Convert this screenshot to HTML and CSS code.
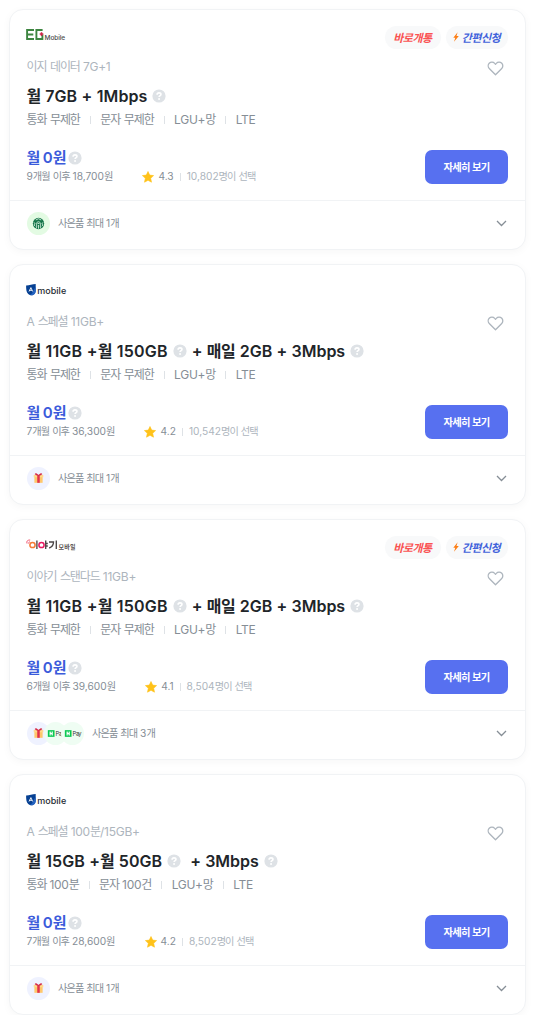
FILE: index.html
```html
<!DOCTYPE html>
<html lang="ko">
<head>
<meta charset="utf-8">
<title>요금제</title>
<link rel="stylesheet" href="styles.css">
</head>
<body>
<svg class="defs" aria-hidden="true">
  <symbol id="heart" viewBox="0 0 18 16"><path d="M9 14.6 2.6 8.3C.8 6.500.8 3.900 2.300 2.400 4 .8 6.600.9 8.100 2.500L9 3.400l.9-.9C11.400.9 14 .8 15.700 2.400c1.500 1.500 1.500 4.100-.3 5.900z" fill="none" stroke="#adb5bd" stroke-width="1.400" stroke-linejoin="round"/></symbol>
  <symbol id="help" viewBox="0 0 14 14"><circle cx="7" cy="7" r="6.600" fill="#dee2e6"/><path d="M5.100 5.700C5.100 4.500 6 3.900 7 3.900s1.950.6 1.950 1.600c0 1.200-1.850 1.250-1.850 2.600" fill="none" stroke="#fff" stroke-width="1.600"/><circle cx="7.050" cy="10" r="1" fill="#fff"/></symbol>
  <symbol id="star" viewBox="0 0 12 12"><path d="m6 .5 1.700 3.600 3.900.5-2.900 2.700.8 3.900L6 9.300l-3.500 1.900.8-3.900L.4 4.600l3.900-.5z" fill="#ffc21a" stroke="#ffc21a" stroke-width=".6" stroke-linejoin="round"/></symbol>
  <symbol id="chev" viewBox="0 0 11 7"><path d="m1 1 4.500 4.500L10 1" fill="none" stroke="#868e96" stroke-width="1.300"/></symbol>
  <symbol id="gift" viewBox="0 0 24 24"><circle cx="12" cy="12" r="12" fill="#eff2ff"/><path d="M7.700 9.800h8.600v6.700H7.700z" fill="#ffc76b"/><path d="M7 8.300h10v2.400H7z" fill="#ffd98c"/><path d="M10.700 8.300h2.600v8.200h-2.600z" fill="#e0314c"/><path d="M12 8.700C10.500 6.700 8.300 6.500 8.400 7.400c.1.900 1.800 1.300 3.600 1.300 1.800 0 3.500-.4 3.600-1.300.1-.9-2.100-.7-3.600 1.300z" fill="#d52b45" stroke="#d52b45" stroke-width=".5"/></symbol>
  <symbol id="coffee" viewBox="0 0 24 24"><circle cx="12" cy="12" r="12" fill="#e3fbe3"/><circle cx="12" cy="12" r="5.900" fill="#16764a"/><path d="M9.200 8.300 12 7l2.800 1.300M9.700 17.200c.8-2 .2-3.300.3-5 .1-2.700 3.900-2.700 4 0 .1 1.700-.5 3 .3 5M7 11l1.500 1-1.200 1.500 1.300 1.300M17 11l-1.500 1 1.200 1.500-1.300 1.300M12 13.500v4M11 12h2" fill="none" stroke="#d8f1df" stroke-width=".9"/></symbol>
  <symbol id="npay" viewBox="0 0 24 24"><circle cx="12" cy="12" r="12" fill="#effdf3"/><path d="M4 8.500h7v7H4z" fill="#09c850"/><path d="M6.400 10v4M8.600 10v4M6.400 11.300l2.200 1.400" stroke="#fff" stroke-width="1.200"/><text x="12" y="14.300" font-family="Inter, sans-serif" font-size="6" fill="#333" textLength="9.500">Pay</text></symbol>
  <symbol id="bolt" viewBox="0 0 6 10"><path d="M4.600.3.300 5.800h2L1 9.700l4.800-5.700H3.500z" fill="#fd7e14"/></symbol>
  <symbol id="amobile" viewBox="0 0 42 12"><path d="M.1 1.500C3 1.600 6.500.3 9.700 0v6.500c0 2-.8 3.800-2.700 4.600-1.200.5-3.500.1-4.800-1.100C.4 8.400.1 5.500.1 1.500z" fill="#064092"/><path d="M9.700 2.500v4c0 2-.8 3.800-2.700 4.600-.8.300-1.800.3-2.800-.1C6.800 9.200 7.500 6 9.700 2.500z" fill="#2563c0"/><path d="M3 7.500 4.900 3.600 6.700 7.500M3.900 6.300h2.100" fill="none" stroke="#fff" stroke-width=".9"/><text x="11.200" y="9.700" font-family="Inter, sans-serif" font-size="9" font-weight="500" fill="#252a31" textLength="29">mobile</text></symbol>
  <symbol id="egmobile" viewBox="0 0 42 13"><path d="M8 2H1.100v9H8M1 6.500h6.300M16.600 2h-6.200v9h6V6.500" fill="none" stroke="#3d8540" stroke-width="1.900"/><path d="M15.500 4.300v3.600M13.700 6.100h3.600" stroke="#cf2448" stroke-width="1.500"/><text x="18.600" y="11.700" font-family="Inter, sans-serif" font-size="6.500" font-weight="500" fill="#4b4b4b" textLength="20.500">Mobile</text></symbol>
  <symbol id="story" viewBox="0 0 52 12"><path d="M1 4.500C.1 2 2 .8 4.200 1M2.500 4.500c0-1 .5-1.500 1.500-1.700" fill="none" stroke="#ef4864" stroke-width=".9"/><circle cx="6.500" cy="6" r="2.600" fill="none" stroke="#f57b36" stroke-width="1.500"/><circle cx="15.500" cy="6" r="2.600" fill="none" stroke="#e71b62" stroke-width="1.500"/><path d="M10.900 1.500V10M19.700 1.500V10M20 4.500h1.800M20 7h1.800M23 3h4.500c0 3-1.500 5-4.300 6M30.300 1.500V10" fill="none" stroke="#4b4545" stroke-width="1.350"/><text x="32.500" y="9.800" font-family="Noto Sans CJK KR, sans-serif" font-size="6" font-weight="700" fill="#564f4f" textLength="17">모바일</text></symbol>
</svg>
<main class="list">
  <article class="card">
    <div class="body">
      <div class="top"><svg class="logo eg"><use href="#egmobile"/></svg><div class="badges"><span class="badge red">바로개통</span><span class="badge blue"><svg class="bolt"><use href="#bolt"/></svg>간편신청</span></div></div>
      <div class="name"><span><i>이지 데이터</i> 7G+1</span><svg class="heart"><use href="#heart"/></svg></div>
      <h2 class="data"><i>월</i> 7GB + 1Mbps<svg class="help"><use href="#help"/></svg></h2>
      <div class="specs"><span><i>통화 무제한</i></span><span><i>문자 무제한</i></span><span>LGU+<i>망</i></span><span>LTE</span></div>
      <div class="buy"><div><div class="price"><i>월</i> 0<i>원</i><svg class="help"><use href="#help"/></svg></div>
        <div class="meta"><span class="after">9<i>개월 이후</i> 18,700<i>원</i></span><svg class="star"><use href="#star"/></svg><span class="rate">4.3</span><span class="picks">10,802<i>명이 선택</i></span></div></div>
        <button class="more">자세히 보기</button></div>
    </div>
    <div class="foot"><svg class="gift"><use href="#coffee"/></svg><span class="gifts"><i>사은품 최대</i> 1<i>개</i></span><svg class="chev"><use href="#chev"/></svg></div>
  </article>
  <article class="card">
    <div class="body">
      <div class="top"><svg class="logo"><use href="#amobile"/></svg></div>
      <div class="name"><span>A <i>스페셜</i> 11GB+</span><svg class="heart"><use href="#heart"/></svg></div>
      <h2 class="data"><span class="main"><i>월</i> 11GB +<i>월</i> 150GB</span><svg class="help"><use href="#help"/></svg><span class="plus">+ <i>매일</i> 2GB + 3Mbps</span><svg class="help"><use href="#help"/></svg></h2>
      <div class="specs"><span><i>통화 무제한</i></span><span><i>문자 무제한</i></span><span>LGU+<i>망</i></span><span>LTE</span></div>
      <div class="buy"><div><div class="price"><i>월</i> 0<i>원</i><svg class="help"><use href="#help"/></svg></div>
        <div class="meta"><span class="after">7<i>개월 이후</i> 36,300<i>원</i></span><svg class="star"><use href="#star"/></svg><span class="rate">4.2</span><span class="picks">10,542<i>명이 선택</i></span></div></div>
        <button class="more">자세히 보기</button></div>
    </div>
    <div class="foot"><svg class="gift"><use href="#gift"/></svg><span class="gifts"><i>사은품 최대</i> 1<i>개</i></span><svg class="chev"><use href="#chev"/></svg></div>
  </article>
  <article class="card">
    <div class="body">
      <div class="top"><svg class="logo story"><use href="#story"/></svg><div class="badges"><span class="badge red">바로개통</span><span class="badge blue"><svg class="bolt"><use href="#bolt"/></svg>간편신청</span></div></div>
      <div class="name"><span><i>이야기 스탠다드</i> 11GB+</span><svg class="heart"><use href="#heart"/></svg></div>
      <h2 class="data"><span class="main"><i>월</i> 11GB +<i>월</i> 150GB</span><svg class="help"><use href="#help"/></svg><span class="plus">+ <i>매일</i> 2GB + 3Mbps</span><svg class="help"><use href="#help"/></svg></h2>
      <div class="specs"><span><i>통화 무제한</i></span><span><i>문자 무제한</i></span><span>LGU+<i>망</i></span><span>LTE</span></div>
      <div class="buy"><div><div class="price"><i>월</i> 0<i>원</i><svg class="help"><use href="#help"/></svg></div>
        <div class="meta"><span class="after">6<i>개월 이후</i> 39,600<i>원</i></span><svg class="star"><use href="#star"/></svg><span class="rate">4.1</span><span class="picks">8,504<i>명이 선택</i></span></div></div>
        <button class="more">자세히 보기</button></div>
    </div>
    <div class="foot"><svg class="gift"><use href="#gift"/></svg><svg class="gift over"><use href="#npay"/></svg><svg class="gift over"><use href="#npay"/></svg><span class="gifts"><i>사은품 최대</i> 3<i>개</i></span><svg class="chev"><use href="#chev"/></svg></div>
  </article>
  <article class="card">
    <div class="body">
      <div class="top"><svg class="logo"><use href="#amobile"/></svg></div>
      <div class="name"><span>A <i>스페셜</i> 100<i>분</i>/15GB+</span><svg class="heart"><use href="#heart"/></svg></div>
      <h2 class="data"><span><i>월</i> 15GB +<i>월</i> 50GB</span><svg class="help"><use href="#help"/></svg><span class="plus wide">+ 3Mbps</span><svg class="help"><use href="#help"/></svg></h2>
      <div class="specs"><span><i>통화</i> 100<i>분</i></span><span><i>문자</i> 100<i>건</i></span><span>LGU+<i>망</i></span><span>LTE</span></div>
      <div class="buy"><div><div class="price"><i>월</i> 0<i>원</i><svg class="help"><use href="#help"/></svg></div>
        <div class="meta"><span class="after">7<i>개월 이후</i> 28,600<i>원</i></span><svg class="star"><use href="#star"/></svg><span class="rate">4.2</span><span class="picks">8,502<i>명이 선택</i></span></div></div>
        <button class="more">자세히 보기</button></div>
    </div>
    <div class="foot"><svg class="gift"><use href="#gift"/></svg><span class="gifts"><i>사은품 최대</i> 1<i>개</i></span><svg class="chev"><use href="#chev"/></svg></div>
  </article>
</main>
</body>
</html>
```
FILE: styles.css
```css
* { box-sizing: border-box; }
body { margin: 0; background: #fff; font-family: Inter, "Noto Sans CJK KR", sans-serif; }
svg { display: block; flex: none; }
i { font-style: normal; letter-spacing: -0.09em; word-spacing: .1em; }
.defs { display: none; }
.list { display: flex; flex-direction: column; gap: 14px; padding: 9px 8px 0 9px; }
.card { height: 241px; border: 1px solid #f1f3f5; border-radius: 14px; background: #fff; box-shadow: 0 2px 8px rgba(0, 0, 0, .035); }
.body { height: 190px; padding: 16px 17px 0 16px; }
.top { display: flex; height: 23px; justify-content: space-between; align-items: center; }
.logo { width: 42px; height: 12px; margin-top: -5px; }
.logo.eg { height: 13px; margin-top: -6px; }
.logo.story { width: 52px; margin-top: -5px; }
.badges { display: flex; gap: 5px; }
.badge { display: flex; align-items: center; justify-content: center; height: 23px; border-radius: 12px; background: #f8f9fa; font: italic 700 11px/21px "Noto Sans CJK KR", sans-serif; letter-spacing: -.5px; padding: 0 1px 1px 0; }
.badge.red { width: 56px; color: #fa5252; }
.badge.blue { width: 62px; color: #4263db; }
.bolt { width: 6px; height: 10px; margin-right: 3px; }
.name { display: flex; justify-content: space-between; height: 20px; margin-top: 8px; font-size: 12px; line-height: 20px; letter-spacing: -.25px; color: #adb5bd; padding-left: .5px; white-space: pre; }
.heart { width: 17px; height: 15px; margin: 4px 4px 0 0; }
.data { display: flex; align-items: center; height: 24px; margin: 7px 0 0; padding-left: .5px; font-size: 16px; line-height: 24px; font-weight: 600; letter-spacing: .05px; word-spacing: .3px; color: #212529; white-space: pre; }
.data i { letter-spacing: -.02em; }
.main { letter-spacing: .2px; }
.help { width: 14px; height: 14px; }
.data .help { margin-left: 5px; }
.plus { margin-left: 5px; letter-spacing: -.03px; }
.plus.wide { margin-left: 9px; }
.specs { display: flex; height: 18px; margin-top: 3px; padding-left: .5px; font-size: 12px; line-height: 18px; letter-spacing: -.3px; color: #868e96; white-space: pre; }
.specs span { display: flex; align-items: center; }
.specs span i { white-space: pre; }
.specs span + span::before { content: ""; width: 1px; height: 8px; background: #dee2e6; margin: 0 9.500px 0 10px; }
.buy { display: flex; justify-content: space-between; margin-top: 19px; padding-left: .5px; }
.price { display: flex; align-items: center; height: 20px; font-size: 15px; font-weight: 600; line-height: 20px; color: #3b5bdb; white-space: pre; }
.price .help { margin-left: 3px; }
.meta { display: flex; align-items: center; height: 17px; font-size: 10.200px; line-height: 17px; white-space: pre; color: #868e96; }
.star { width: 12px; height: 12px; margin: 0 4px 0 30px; }
.picks { display: flex; align-items: center; color: #adb5bd; }
.picks::before { content: ""; width: 1px; height: 8px; margin: 0 6px; background: #dee2e6; }
.more { width: 83px; height: 34px; margin-top: 2px; padding: 0 0 1px; border: 0; border-radius: 7px; background: #5770f0; color: #fff; font: 700 10.300px "Noto Sans CJK KR", sans-serif; letter-spacing: -.7px; }
.foot { display: flex; align-items: center; height: 49px; border-top: 1px solid #f1f3f5; padding: 0 18px 3px 17px; }
.gift { width: 23px; height: 23px; }
.gift.over { margin-left: -6px; }
.gifts { margin: -1px 0 0 8px; font-size: 10.200px; line-height: 18px; color: #868e96; white-space: pre; }
.chev { width: 11px; height: 7px; margin-left: auto; }
```
